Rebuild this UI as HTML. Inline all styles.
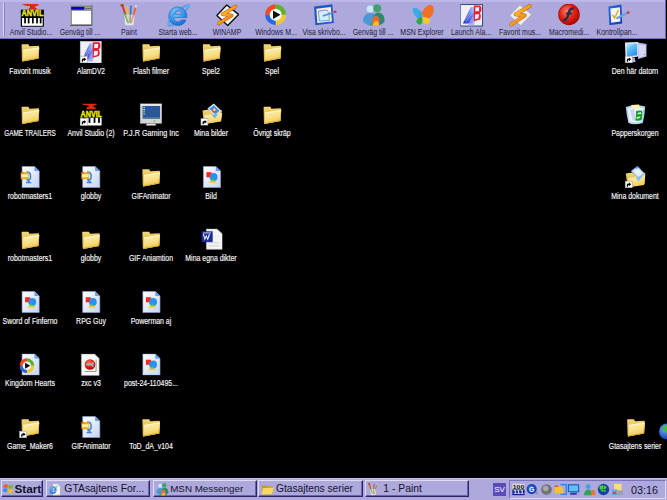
<!DOCTYPE html>
<html><head><meta charset="utf-8"><style>
html,body{margin:0;padding:0;}
body{width:667px;height:500px;background:#000;position:relative;overflow:hidden;font-family:"Liberation Sans",sans-serif;}
#tb{position:absolute;left:0;top:0;width:665px;height:38px;background:#aea9dc;border-bottom:1px solid #7872bc;border-right:1px solid #6a64b0;}
#tbtop{position:absolute;left:0;top:0;width:665px;height:2px;background:#bcb8e8;}
#grip{position:absolute;left:3px;top:3px;width:1px;height:33px;background:#dcd8f8;border-right:1px solid #8580c4;}
#icons{position:absolute;left:0;top:0;}
.tl{position:absolute;width:80px;text-align:center;font-size:8.4px;line-height:9px;color:#1c1a3c;white-space:nowrap;transform:scaleX(0.83);}
.dl{position:absolute;width:80px;text-align:center;font-size:8.4px;line-height:9px;color:#f8f8f8;white-space:nowrap;transform:scaleX(0.83);-webkit-text-stroke:0.15px #f8f8f8;}
#task{position:absolute;left:0;top:478px;width:667px;height:22px;background:#aea9dc;border-top:1px solid #c8c4ec;}
.btn{position:absolute;top:1px;height:15.4px;background:#aea9dc;border-top:1px solid #e0dcf8;border-left:1px solid #e0dcf8;border-right:1px solid #2c2668;border-bottom:1px solid #2c2668;box-shadow:inset -1px -1px 0 #6a64a8;}
.bt{position:absolute;top:1.2px;font-size:10.4px;line-height:14px;color:#14122c;white-space:nowrap;}
.grip2{position:absolute;top:3px;width:1px;height:15px;background:#e0dcf8;border-right:1px solid #6a64a8;}
#tray{position:absolute;left:509px;top:1px;width:155px;height:17px;border-top:1px solid #7872bc;border-left:1px solid #7872bc;border-right:1px solid #e0dcf8;border-bottom:1px solid #e0dcf8;}
.clock{position:absolute;left:631px;top:4.5px;font-size:10.8px;line-height:13px;color:#14122c;}
</style></head><body>
<div id="tb"><div id="tbtop"></div><div id="grip"></div></div>
<svg id="icons" width="667" height="500" viewBox="0 0 667 500"><defs>
<linearGradient id="gFront" x1="0" y1="0" x2="0.3" y2="1"><stop offset="0" stop-color="#fcf0b0"/><stop offset="0.6" stop-color="#f8e088"/><stop offset="1" stop-color="#f0c850"/></linearGradient>
<linearGradient id="gBack" x1="0" y1="0" x2="0" y2="1"><stop offset="0" stop-color="#f4d878"/><stop offset="1" stop-color="#d0a030"/></linearGradient>
<linearGradient id="gDoc" x1="0" y1="0" x2="1" y2="1"><stop offset="0" stop-color="#ffffff"/><stop offset="1" stop-color="#c4d4f4"/></linearGradient>
<linearGradient id="gScreen" x1="0" y1="0" x2="0.6" y2="1"><stop offset="0" stop-color="#c8f0ff"/><stop offset="0.45" stop-color="#60c0f8"/><stop offset="1" stop-color="#2a90f0"/></linearGradient>
<linearGradient id="gBlueA" x1="0" y1="1" x2="1" y2="0"><stop offset="0" stop-color="#1a2ad0"/><stop offset="0.6" stop-color="#6a80f0"/><stop offset="1" stop-color="#d0d8ff"/></linearGradient>
<linearGradient id="gBolt" x1="0" y1="0" x2="1" y2="1"><stop offset="0" stop-color="#ffe040"/><stop offset="0.5" stop-color="#f8a020"/><stop offset="1" stop-color="#e06010"/></linearGradient>
<linearGradient id="gCP" x1="0" y1="0" x2="1" y2="1"><stop offset="0" stop-color="#2a6ae0"/><stop offset="1" stop-color="#0c3aa8"/></linearGradient>
<radialGradient id="gRed" cx="0.4" cy="0.35" r="0.7"><stop offset="0" stop-color="#ff8070"/><stop offset="0.55" stop-color="#e02010"/><stop offset="1" stop-color="#a00808"/></radialGradient>
<radialGradient id="gIE" cx="0.4" cy="0.3" r="0.8"><stop offset="0" stop-color="#8ad0ff"/><stop offset="0.6" stop-color="#2a90e8"/><stop offset="1" stop-color="#1060c0"/></radialGradient>
<radialGradient id="gGlobe" cx="0.35" cy="0.35" r="0.75"><stop offset="0" stop-color="#6aa8ff"/><stop offset="1" stop-color="#1030a0"/></radialGradient>

<!-- ===== toolbar symbols, 23x23 px ===== -->
<symbol id="t_anvil" viewBox="0 0 23 23" overflow="visible">
  <rect x="0" y="5.7" width="23.1" height="17" fill="#000"/>
  <path d="M0.8 0.3 L6 0 L17.7 0 L17.7 1.8 L14.6 2 L14.6 3.9 L16 4 L16 5.7 L8 5.7 L8 4 L9.5 3.9 L9.5 2.2 L5 1.8 Z" fill="#e02a10"/>
  <path d="M9.5 2.2 L10.5 2.2 L10.3 3.9 L9.5 3.9 Z" fill="#303060"/>
  <text x="11.6" y="12.4" font-family="Liberation Sans" font-weight="bold" font-size="8.8" fill="#f4f000" stroke="#f4f000" stroke-width="0.35" text-anchor="middle" textLength="22" lengthAdjust="spacingAndGlyphs">ANVIL</text>
  <rect x="1.2" y="14" width="20.7" height="7.8" fill="#fff"/>
  <rect x="3.4" y="14" width="1.7" height="5.4" fill="#000"/>
  <rect x="7" y="14" width="1.7" height="5.4" fill="#000"/>
  <rect x="11.2" y="14" width="1.7" height="5.4" fill="#000"/>
  <rect x="15.4" y="14" width="1.7" height="5.4" fill="#000"/>
  <rect x="19" y="14" width="1.7" height="5.4" fill="#000"/>
</symbol>
<symbol id="t_window" viewBox="0 0 23 23">
  <rect x="0.4" y="1.1" width="22.4" height="20.7" fill="#3a3a3a"/>
  <rect x="0.4" y="1.1" width="21.6" height="20" fill="#a8a8a8"/>
  <rect x="1.4" y="2.1" width="20.6" height="18.8" fill="#808080"/>
  <rect x="1.6" y="2.9" width="13.2" height="2.7" fill="#0000c8"/>
  <rect x="15" y="2.9" width="6.4" height="2.7" fill="#b0b0b0"/>
  <rect x="16" y="3.8" width="1" height="1" fill="#000"/><rect x="18" y="3.8" width="1" height="1" fill="#000"/><rect x="20" y="3.8" width="1" height="1" fill="#000"/>
  <rect x="2.2" y="6.8" width="19.2" height="13.4" fill="#fff"/>
</symbol>
<symbol id="t_paint" viewBox="0 0 23 23">
  <path d="M5.5 10.4 L16.3 10.4 L15.2 21.2 L6.6 21.2 Z" fill="#e8f0f4" stroke="#98a8b0" stroke-width="0.7"/>
  <path d="M3.8 1.2 L9.5 19" stroke="#e03020" stroke-width="1.8"/>
  <path d="M8.5 2 L11 19.5" stroke="#f0c020" stroke-width="1.9"/>
  <path d="M12.5 1.5 L11.5 19" stroke="#3a70e0" stroke-width="1.7"/>
  <path d="M17.5 2.5 L12.5 19.5" stroke="#f06020" stroke-width="1.8"/>
  <path d="M6 9 L9.8 19.5" stroke="#30b040" stroke-width="1.6"/>
  <circle cx="3.6" cy="1.2" r="1.6" fill="#b04a20"/>
  <circle cx="17.6" cy="2.4" r="1.3" fill="#d0d0f0"/>
  <path d="M5.5 10.4 L16.3 10.4 L15.2 21.2 L6.6 21.2 Z" fill="#f4f8ff" opacity="0.35"/>
</symbol>
<symbol id="t_ie" viewBox="0 0 23 23">
  <path d="M10.5 3 C5 3 1.5 7 1.5 12.5 C1.5 18 5.5 21.5 10.5 21.5 C14.5 21.5 17.5 19.5 18.8 16 L13.8 16 C13 17.3 11.8 17.8 10.5 17.8 C8 17.8 6.3 16 6.2 13.6 L19.4 13.6 C19.5 13 19.5 12.7 19.5 12.2 C19.5 6.8 15.8 3 10.5 3 Z M6.4 10.3 C6.8 8 8.4 6.7 10.6 6.7 C12.8 6.7 14.3 8 14.6 10.3 Z" fill="url(#gIE)" stroke="#1868c0" stroke-width="0.6"/>
  <path d="M0.8 21.8 C-1 19.5 2.5 13 9 7.5 C15.5 2 21 -0.5 22 1 C22.8 2.2 21 4.8 18 7.5 C19.5 5.3 20 3.6 19.2 3 C17.8 2 13 4.5 8.5 8.8 C3.5 13.5 1.2 18.5 2.6 20.8 C3.3 21.8 5.5 21.3 8 20 C5 22 2 22.8 0.8 21.8 Z" fill="#60b8f8" stroke="#2878d0" stroke-width="0.4"/>
</symbol>
<symbol id="t_winamp" viewBox="0 0 23 23">
  <path d="M10.6 1 L22.4 10.4 L11.6 21.6 L0.6 11.6 Z" fill="#f4f4f4" stroke="#101010" stroke-width="1.4" stroke-linejoin="round"/>
  <path d="M19.5 2.5 L6.5 10.3 L15.5 11.5 L2.5 19.5" fill="none" stroke="#c05808" stroke-width="3.6" stroke-linejoin="round" stroke-linecap="round"/>
  <path d="M19.5 2.5 L6.5 10.3 L15.5 11.5 L2.5 19.5" fill="none" stroke="url(#gBolt)" stroke-width="2.6" stroke-linejoin="round" stroke-linecap="round"/>
</symbol>
<symbol id="t_winamp2" viewBox="0 0 23 23">
  <path d="M10.6 1 L22.4 10.4 L11.6 21.6 L0.6 11.6 Z" fill="#ececf0" stroke="#a8a8b8" stroke-width="0.8" stroke-linejoin="round"/>
  <path d="M20.5 2 L6.5 10.3 L15.5 11.5 L2 20.5" fill="none" stroke="#c05808" stroke-width="3.8" stroke-linejoin="round" stroke-linecap="round"/>
  <path d="M20.5 2 L6.5 10.3 L15.5 11.5 L2 20.5" fill="none" stroke="url(#gBolt)" stroke-width="2.8" stroke-linejoin="round" stroke-linecap="round"/>
</symbol>
<symbol id="t_wmp" viewBox="0 0 23 23">
  <path d="M10.65 10.7 L10.65 0.2 A10.5 10.5 0 0 0 0.15 10.7 Z" fill="#f04a20"/>
  <path d="M10.65 10.7 L21.15 10.7 A10.5 10.5 0 0 0 10.65 0.2 Z" fill="#60b030"/>
  <path d="M10.65 10.7 L10.65 21.2 A10.5 10.5 0 0 0 21.15 10.7 Z" fill="#f0c830"/>
  <path d="M10.65 10.7 L0.15 10.7 A10.5 10.5 0 0 0 10.65 21.2 Z" fill="#2a6ae0"/>
  <circle cx="10.65" cy="10.7" r="6" fill="#f8f8f8"/>
  <path d="M8 6.5 L15.5 10.7 L8 15 Z" fill="#101010"/>
</symbol>
<symbol id="t_showdesk" viewBox="0 0 23 23">
  <path d="M0.2 2.5 L18.5 0.2 L20 19 L1.5 21.2 Z" fill="#1c58d0"/>
  <path d="M2.5 4.8 L17 3 L18 17.5 L3.5 19 Z" fill="#fff0c0"/>
  <path d="M4.5 7 L13 6 L15 8.5 L15.5 16.5 L5.5 17 Z" fill="#d8ecff" stroke="#5888d0" stroke-width="0.8"/>
  <path d="M9 12 L21 8" stroke="#4a88e0" stroke-width="1.8"/>
  <circle cx="21.5" cy="7.8" r="1.3" fill="#e03030"/>
</symbol>
<symbol id="t_msn" viewBox="0 0 23 23">
  <circle cx="7.5" cy="5" r="3.6" fill="#c8e8f8"/>
  <circle cx="14.5" cy="4.2" r="4" fill="#40a070"/>
  <path d="M0 17 Q1 9 8 9 Q13 9 13 14 L9 21.8 Q3 21 0 17 Z" fill="#4a98d8"/>
  <path d="M10 19 Q10 8.5 15 8.5 Q22 8.5 22 17 Q20 21 16 21 Z" fill="#308870"/>
  <path d="M8.5 21.5 Q9 12 13.5 12 Q17.5 12 16.5 21.5 Z" fill="#f06a30"/>
  <path d="M10 21.5 Q11 17 14.5 17 Q16.5 18 16 21.5 Z" fill="#f8c030"/>
  <path d="M7 21.5 Q8 18 10.5 18 L9.5 21.8 Z" fill="#40b040"/>
</symbol>
<symbol id="t_msnexp" viewBox="0 0 23 23">
  <path d="M11 9 Q5 2.5 1.5 4 Q0 6 3 11 Q5 14.5 10 15.5 Z" fill="#40a8e8"/>
  <path d="M10 9 Q14 1 19 0.8 Q23 1.5 22 8 Q21 14 13 16 Z" fill="#f07028"/>
  <path d="M9.5 13 Q4 15 5 18.5 Q6.5 21 9 20.6 Q11 19 11 14 Z" fill="#30a840"/>
  <path d="M11 13 Q18 13 18.5 16.5 Q18 20.5 13.5 20 Q11 18 11 14 Z" fill="#f8c828"/>
  <path d="M6 9 Q8 7 10.5 10 L10 14 Q7 12 6 9 Z" fill="#30b0b0" opacity="0.8"/>
</symbol>
<symbol id="t_alam" viewBox="0 0 23 23">
  <rect x="0" y="0.6" width="22.2" height="21.4" fill="#f0f0f4" stroke="#283880" stroke-width="0.9"/>
  <path d="M2.5 19.5 L10.5 3 L16 3 L12 19.5 Z" fill="url(#gBlueA)"/>
  <path d="M4 16.5 L13 4.5 M5.5 18 L14 6" stroke="#e0e4ff" stroke-width="0.6" opacity="0.8"/>
  <path d="M7 21.5 L14 9.5 L16.5 10.5 L13.5 21.5 Z" fill="#9aa8f0" opacity="0.8"/>
  <path d="M13.5 1.5 L19.8 1.5 Q21.8 3 20.8 7.5 L19.3 9 Q21.3 10.5 19.8 15.5 L13.3 17.3 Z" fill="#e82030"/>
  <path d="M15.1 3.3 L18.9 3.3 L18.6 7.3 L14.9 7.3 Z M14.9 10.3 L18.8 10.3 L18.1 14.3 L14.5 15.3 Z" fill="#f8f4ff"/>
</symbol>
<symbol id="t_flash" viewBox="0 0 23 23">
  <circle cx="10.95" cy="10.4" r="10.8" fill="#b00c08"/>
  <circle cx="10.95" cy="10.4" r="10" fill="url(#gRed)"/>
  <path d="M16 4.5 Q11.5 4 10.5 9.5 Q9.5 15.5 5 16.5" fill="none" stroke="#1c3050" stroke-width="2.3"/>
  <path d="M8 9.5 L14 9.5" stroke="#1c3050" stroke-width="2"/>
</symbol>
<symbol id="t_ctrl" viewBox="0 0 23 23">
  <path d="M1.5 2.5 L14.5 0.5 L15.3 19.5 L2.5 21.2 Z" fill="url(#gCP)"/>
  <path d="M3.5 4.5 L13 3.2 L13.5 17.5 L4.3 18.8 Z" fill="#f0f4ff"/>
  <path d="M5.5 11 L7.7 14 L11.5 6" fill="none" stroke="#e0b020" stroke-width="1.5"/>
  <path d="M9.5 14.5 L20.5 9" stroke="#68a0e8" stroke-width="2.2"/>
  <circle cx="21.3" cy="8.6" r="1.4" fill="#d83a20"/>
</symbol>

<!-- ===== desktop symbols, 22x22 px ===== -->
<symbol id="folder" viewBox="0 0 22 22">
  <path d="M2.6 3.6 L3.2 3.3 L9.4 3.2 L10.4 5.2 L19.8 4.8 L20.3 6.9 L19.6 17.6 L3.4 20.5 L2.9 18.8 Z" fill="url(#gBack)"/>
  <path d="M4.2 9 L20.1 6.6 L19.4 17.5 L3.4 20.4 Z" fill="url(#gFront)"/>
  <path d="M4.2 9 L20.1 6.6 L20 7.6 L4.1 10 Z" fill="#fff8d0"/>
  <path d="M20.1 6.6 L19.4 17.5 L3.4 20.4 L3.6 19.4 L18.6 16.8 Z" fill="#d8a838"/>
</symbol>
<symbol id="arrow" viewBox="0 0 22 22">
  <rect x="0.6" y="15.2" width="7" height="6.6" fill="#fff" stroke="#a0a0a0" stroke-width="0.6"/>
  <path d="M2.2 20.8 L2.2 19 Q2.2 17.6 4 17.6 L4.4 17.6 L4.4 16.4 L6.6 18.3 L4.4 20.2 L4.4 19 L4.1 19 Q3.5 19 3.5 19.6 L3.5 20.8 Z" fill="#000"/>
</symbol>
<symbol id="doc" viewBox="0 0 22 22">
  <path d="M3.1 0.4 L15.5 0.4 L20.2 5 L20.2 21.6 L3.1 21.6 Z" fill="url(#gDoc)" stroke="#98a8d8" stroke-width="0.6"/>
  <path d="M15.5 0.4 L15.5 5 L20.2 5 Z" fill="#60a0f0"/>
</symbol>
<symbol id="imgdoc" viewBox="0 0 22 22">
  <use href="#doc" width="22" height="22"/>
  <rect x="6.1" y="6.2" width="5.1" height="5.1" fill="#f82a10"/>
  <circle cx="13.3" cy="10.9" r="3.9" fill="#2a90f8"/>
  <path d="M10.2 15.2 L12.5 11.9 L14.8 15.2 Z" fill="#40d040"/>
  <rect x="9.1" y="15.2" width="6.6" height="1.5" fill="#f8c820"/>
</symbol>
<symbol id="gifdoc" viewBox="0 0 22 22">
  <use href="#doc" width="22" height="22"/>
  <path d="M7.5 6 Q11.5 6 11.5 9.5 L11.5 11.5 Q11.5 13.8 9 13.8 L7.5 13.8 M8.5 13.8 L11 16.5 L7 16.5" fill="none" stroke="#3a80e0" stroke-width="1.5"/>
  <rect x="1.8" y="6.2" width="7.8" height="7" fill="#e8a828"/>
  <rect x="2.4" y="8.2" width="6.6" height="3" fill="#fff0a0"/>
  <rect x="1.8" y="6.2" width="2.5" height="1.2" fill="#e05020"/>
</symbol>
<symbol id="anvil" viewBox="0 0 22 22">
  <path d="M0.8 0 L17 0 L17 1.6 L14 2 L14 3.6 L16 4 L16 5.8 L7 5.8 L7 4 L9 3.6 L9 2 L4.5 1.6 Z" fill="#e02a10"/>
  <text x="11.7" y="13" font-family="Liberation Sans" font-weight="bold" font-size="9.5" fill="#f4f000" stroke="#f4f000" stroke-width="0.4" text-anchor="middle" textLength="21.5" lengthAdjust="spacingAndGlyphs">ANVIL</text>
  <rect x="0.6" y="14.2" width="22" height="8.3" fill="#fff"/>
  <rect x="4" y="14.2" width="1.8" height="5.2" fill="#000"/>
  <rect x="9" y="14.2" width="1.8" height="5.2" fill="#000"/>
  <rect x="14" y="14.2" width="1.8" height="5.2" fill="#000"/>
  <rect x="18.5" y="14.2" width="1.8" height="5.2" fill="#000"/>
</symbol>
<symbol id="monitor" viewBox="0 0 22 22">
  <rect x="0.3" y="-0.1" width="22.2" height="20" fill="#d4d4d4" stroke="#8a8a8a" stroke-width="0.6"/>
  <rect x="1" y="0.6" width="20.8" height="1.5" fill="#ececec"/>
  <rect x="2.8" y="2.5" width="17.4" height="12.6" fill="#2a5894"/>
  <rect x="2.8" y="13.8" width="17.4" height="1.3" fill="#5a78a8"/>
  <rect x="3.6" y="3.3" width="1.5" height="1.3" fill="#60e0c0"/>
  <rect x="3.6" y="5.5" width="1.5" height="1.3" fill="#f0f0a0"/>
  <rect x="3.6" y="7.7" width="1.5" height="1.3" fill="#a0d060"/>
  <rect x="3.6" y="9.9" width="1.5" height="1.3" fill="#90c0f0"/>
  <rect x="14" y="17" width="1.5" height="1.2" fill="#30c030"/>
  <path d="M7 19.9 L15.5 19.9 L16.5 22.9 L6 22.9 Z" fill="#e4e4e4" stroke="#888" stroke-width="0.5"/>
</symbol>
<symbol id="alam" viewBox="0 0 22 22">
  <rect x="0.6" y="0.3" width="21.5" height="21.8" fill="#f0f0f4" stroke="#a8c0e0" stroke-width="0.7"/>
  <path d="M2.5 18.5 L10 2.5 L15.5 2.5 L11.5 18.5 Z" fill="url(#gBlueA)"/>
  <path d="M4 15.5 L12.5 4 M5.5 17 L13.5 5.5" stroke="#e0e4ff" stroke-width="0.6" opacity="0.8"/>
  <path d="M7 20.5 L13.5 9 L16 10 L13 20.5 Z" fill="#9aa8f0" opacity="0.8"/>
  <path d="M13.2 1.2 L19.5 1.2 Q21.5 2.5 20.5 7 L19 8.5 Q21 10 19.5 15 L13 16.8 Z" fill="#e82030"/>
  <path d="M14.8 3 L18.6 3 L18.3 7 L14.6 7 Z M14.6 10 L18.5 10 L17.8 14 L14.2 15 Z" fill="#f8f4ff"/>
</symbol>
<symbol id="mypics" viewBox="0 0 22 22">
  <path d="M2.2 7 L8.5 6 L10 7.5 L21.5 6.5 L21 17.5 L3.5 20.6 Z" fill="url(#gBack)"/>
  <path d="M7.5 5 L13.5 0.2 L21 7.5 L15 12.5 Z" fill="#fff" stroke="#b8c8e0" stroke-width="0.6"/>
  <path d="M8.8 5.2 L13.5 1.6 L19.5 7.5 L15 11 Z" fill="#3a98e8"/>
  <circle cx="14" cy="7" r="2.2" fill="#f04830"/>
  <circle cx="14" cy="6.3" r="1.2" fill="#ffe0d0"/>
  <path d="M4 11.5 L22 9.5 L20.5 18 L4.5 20.6 Z" fill="url(#gFront)"/>
  <path d="M11 11 L18 10.2 L14.5 15 Z" fill="#70b8f0"/>
</symbol>
<symbol id="worddoc" viewBox="0 0 22 22">
  <path d="M6.1 0.4 L16.5 0.4 L22.3 5.5 L22.3 20.8 L6.1 20.8 Z" fill="#f4f4f4" stroke="#c0c0c0" stroke-width="0.6"/>
  <rect x="8" y="14" width="11" height="0.8" fill="#c8c8c8"/>
  <rect x="8" y="17" width="11" height="0.8" fill="#c8c8c8"/>
  <rect x="1.3" y="2.8" width="11.1" height="10.8" fill="#1c2c98"/>
  <rect x="2.8" y="4" width="8" height="0.9" fill="#e0e8ff"/>
  <path d="M2.6 5.8 L4.5 12 L6 8.5 L7.5 12 L9.8 5.8 L8.5 5.8 L7.4 9.5 L6 6.2 L4.6 9.5 L3.8 5.8 Z" fill="#fff"/>
</symbol>
<symbol id="wmpdoc" viewBox="0 0 22 22">
  <use href="#doc" width="22" height="22"/>
  <g transform="translate(0.4 4.6) scale(0.705)"><use href="#t_wmp" width="23" height="23"/></g>
</symbol>
<symbol id="reddoc" viewBox="0 0 22 22">
  <path d="M1.8 0.6 L15 0.6 L19.5 5 L19.5 22.4 L1.8 22.4 Z" fill="#f8f8f4" stroke="#b0b0a8" stroke-width="0.6"/>
  <circle cx="10.4" cy="11" r="5.3" fill="url(#gRed)"/>
  <path d="M6.5 10 L12.5 10 L12.5 8.5 L14 8.5 L14 13.5 L12.5 13.5 L12.5 12 L6.5 12 Z" fill="#a8b0b8"/>
  <path d="M5 18 L16.5 18 L16.5 6" fill="none" stroke="#808080" stroke-width="0.8"/>
</symbol>
<symbol id="computer" viewBox="0 0 22 22">
  <path d="M12.9 1.5 L22.2 3 L22.2 15.5 L13.5 18 Z" fill="#b8b8e8"/>
  <path d="M14 3.5 L21 4.5 L21 14.5 L14.5 16.5 Z" fill="#d8d8f4"/>
  <rect x="19" y="13" width="1.4" height="1" fill="#60d060"/>
  <path d="M0.3 1.5 L13.5 0.9 L13.5 15.5 L1 17.4 Z" fill="#e4e4f8"/>
  <path d="M1.8 3 L12.5 2.5 L12.5 14.3 L2.5 15.6 Z" fill="url(#gScreen)"/>
  <path d="M6 17 L10 16.5 L11 21 L5.5 21.5 Z" fill="#b0b0e0"/>
</symbol>
<symbol id="recycle" viewBox="0 0 22 22">
  <path d="M1.2 3.5 Q10 0.5 20.6 3 Q20 12 18.2 19.5 Q10 22 3.8 19.5 Q2 12 1.2 3.5 Z" fill="#b0d4f4"/>
  <path d="M3 4.8 Q10 3 18.8 4.6 Q18 12 16.8 18 Q10 20 5 18 Q4 12 3 4.8 Z" fill="#e8f4fc"/>
  <path d="M6.5 1.6 L14.5 1 L15.2 5 L7 5.5 Z" fill="#f8f0b0"/>
  <path d="M5.5 6 L9.5 5.5 L11 16.5 L8 17 Z" fill="#c8c0f0" opacity="0.7"/>
  <path d="M11.5 7.5 Q15 6.5 17.7 7.3 Q18 12 17 16.5 Q14 17.5 10.8 16.9 Q11.5 12 11.5 7.5 Z" fill="#10a020"/>
  <path d="M12.8 10.3 Q13.5 8.8 15.5 9 L15 8.2 L17 9.7 L15 11 L15.2 10.2 Q14 10 13.6 11 Z M16 13 Q15.3 15.2 13 15 L13.5 15.8 L11.6 14.3 L13.6 13 L13.4 13.8 Q14.6 14 15 12.8 Z" fill="#f0fff0"/>
</symbol>
<symbol id="mydocs" viewBox="0 0 22 22">
  <path d="M1.2 7.5 L8 6.5 L9.5 8 L20.7 6.8 L20 18 L3 21.2 Z" fill="url(#gBack)"/>
  <path d="M6.5 5 L13 0.2 L20 7.5 L13.5 12 Z" fill="#b8d8f8" stroke="#7ca4e0" stroke-width="0.6"/>
  <circle cx="12.6" cy="2.2" r="1.1" fill="#2a80f0"/>
  <path d="M8.5 5.5 L13 2 L18 7.5 L13.8 10.5 Z" fill="#e4f2ff"/>
  <path d="M3.5 12 L20.7 9.2 L19.5 19 L4.5 21.2 Z" fill="url(#gFront)"/>
  <path d="M11 11 L18 9.8 L14 15.5 Z" fill="#80c0f8"/>
</symbol>
<symbol id="globe" viewBox="0 0 32 32">
  <circle cx="16" cy="16" r="15" fill="url(#gGlobe)"/>
  <path d="M10 4 Q18 3 20 9 Q15 13 18 19 Q10 17 7 11 Z" fill="#40c040"/>
  <path d="M20 16 Q27 14 30 20 Q27 28 22 26 Z" fill="#40c040"/>
</symbol>
<symbol id="winlogo" viewBox="0 0 16 16">
  <path d="M1 2.5 Q4 1 7.3 2.3 L6.8 7.3 Q4 6 0.6 7.3 Z" fill="#f25a1e"/>
  <path d="M8.3 2.6 Q11.5 4 15 2.4 L14.5 7.5 Q11.5 9 7.8 7.6 Z" fill="#6fbf20"/>
  <path d="M0.5 8.3 Q4 7 6.7 8.3 L6.2 13.5 Q3.5 12.2 0 13.5 Z" fill="#3a8ee6"/>
  <path d="M7.7 8.6 Q11 10 14.4 8.5 L14 13.8 Q11 15.2 7.3 13.8 Z" fill="#fac000"/>
</symbol>
<symbol id="iedoc" viewBox="0 0 32 32">
  <path d="M9 2 L22 2 L28 8 L28 30 L9 30 Z" fill="#f8f8f0" stroke="#909088" stroke-width="1.2"/>
  <path d="M22 2 L22 8 L28 8 Z" fill="#d0d0c8"/>
  <g transform="translate(0 6) scale(0.95)"><use href="#t_ie" width="23" height="23"/></g>
</symbol>
<symbol id="tfolder" viewBox="0 0 32 32">
  <path d="M2 7 L12 6 L14 8.5 L29 7.5 L29 27 L2 28 Z" fill="#c89820"/>
  <path d="M4 13 L31 11 L28 27 L2 28 Z" fill="#f8d860"/>
</symbol>
<symbol id="tpaint" viewBox="0 0 32 32">
  <use href="#t_paint" width="32" height="32"/>
</symbol>
<symbol id="tmsn" viewBox="0 0 32 32">
  <use href="#t_msn" width="32" height="32"/>
</symbol>
</defs><use href="#t_anvil" x="20.80" y="4.00" width="23" height="23"/><use href="#t_window" x="69.64" y="4.00" width="23" height="23"/><use href="#t_paint" x="118.48" y="4.00" width="23" height="23"/><use href="#t_ie" x="167.32" y="4.00" width="23" height="23"/><use href="#t_winamp" x="216.16" y="4.00" width="23" height="23"/><use href="#t_wmp" x="265.00" y="4.00" width="23" height="23"/><use href="#t_showdesk" x="313.84" y="4.00" width="23" height="23"/><use href="#t_msn" x="362.68" y="4.00" width="23" height="23"/><use href="#t_msnexp" x="411.52" y="4.00" width="23" height="23"/><use href="#t_alam" x="460.36" y="4.00" width="23" height="23"/><use href="#t_winamp2" x="509.20" y="4.00" width="23" height="23"/><use href="#t_flash" x="558.04" y="4.00" width="23" height="23"/><use href="#t_ctrl" x="606.88" y="4.00" width="23" height="23"/><use href="#folder" x="19.00" y="41.00" width="22" height="22"/><use href="#alam" x="79.60" y="41.00" width="22" height="22"/><use href="#arrow" x="79.60" y="41.00" width="22" height="22"/><use href="#folder" x="139.80" y="41.00" width="22" height="22"/><use href="#folder" x="200.30" y="41.00" width="22" height="22"/><use href="#folder" x="261.00" y="41.00" width="22" height="22"/><use href="#folder" x="19.00" y="103.50" width="22" height="22"/><use href="#anvil" x="79.60" y="103.50" width="22" height="22"/><use href="#arrow" x="79.60" y="103.50" width="22" height="22"/><use href="#monitor" x="139.80" y="103.50" width="22" height="22"/><use href="#mypics" x="200.30" y="103.50" width="22" height="22"/><use href="#arrow" x="200.30" y="103.50" width="22" height="22"/><use href="#folder" x="261.00" y="103.50" width="22" height="22"/><use href="#gifdoc" x="19.00" y="166.00" width="22" height="22"/><use href="#gifdoc" x="79.60" y="166.00" width="22" height="22"/><use href="#folder" x="139.80" y="166.00" width="22" height="22"/><use href="#imgdoc" x="200.30" y="166.00" width="22" height="22"/><use href="#folder" x="19.00" y="228.50" width="22" height="22"/><use href="#folder" x="79.60" y="228.50" width="22" height="22"/><use href="#folder" x="139.80" y="228.50" width="22" height="22"/><use href="#worddoc" x="200.30" y="228.50" width="22" height="22"/><use href="#imgdoc" x="19.00" y="291.00" width="22" height="22"/><use href="#imgdoc" x="79.60" y="291.00" width="22" height="22"/><use href="#imgdoc" x="139.80" y="291.00" width="22" height="22"/><use href="#wmpdoc" x="19.00" y="353.50" width="22" height="22"/><use href="#reddoc" x="79.60" y="353.50" width="22" height="22"/><use href="#imgdoc" x="139.80" y="353.50" width="22" height="22"/><use href="#folder" x="19.00" y="416.00" width="22" height="22"/><use href="#arrow" x="19.00" y="416.00" width="22" height="22"/><use href="#gifdoc" x="79.60" y="416.00" width="22" height="22"/><use href="#folder" x="139.80" y="416.00" width="22" height="22"/><use href="#computer" x="624.60" y="41.00" width="22" height="22"/><use href="#arrow" x="624.60" y="41.00" width="22" height="22"/><use href="#recycle" x="624.60" y="103.50" width="22" height="22"/><use href="#mydocs" x="624.60" y="166.00" width="22" height="22"/><use href="#arrow" x="624.60" y="166.00" width="22" height="22"/><use href="#folder" x="624.60" y="416.00" width="22" height="22"/><use href="#globe" x="658.50" y="423.00" width="17" height="17"/></svg>
<div class="tl" style="left:-8.7px;top:27.9px">Anvil Studio...</div><div class="tl" style="left:40.1px;top:27.9px">Genväg till ...</div><div class="tl" style="left:89.0px;top:27.9px">Paint</div><div class="tl" style="left:137.8px;top:27.9px">Starta web...</div><div class="tl" style="left:186.7px;top:27.9px">WINAMP</div><div class="tl" style="left:235.5px;top:27.9px">Windows M...</div><div class="tl" style="left:284.3px;top:27.9px">Visa skrivbo...</div><div class="tl" style="left:333.2px;top:27.9px">Genväg till ...</div><div class="tl" style="left:382.0px;top:27.9px">MSN Explorer</div><div class="tl" style="left:430.9px;top:27.9px">Launch Ala...</div><div class="tl" style="left:479.7px;top:27.9px">Favorit mus...</div><div class="tl" style="left:528.5px;top:27.9px">Macromedi...</div><div class="tl" style="left:577.4px;top:27.9px">Kontrollpan...</div><div class="dl" style="left:-10.0px;top:66.9px">Favorit musik</div><div class="dl" style="left:50.6px;top:66.9px;transform:scaleX(0.79)">AlamDV2</div><div class="dl" style="left:110.8px;top:66.9px">Flash filmer</div><div class="dl" style="left:171.3px;top:66.9px">Spel2</div><div class="dl" style="left:232.0px;top:66.9px">Spel</div><div class="dl" style="left:-10.0px;top:129.4px;transform:scaleX(0.76)">GAME TRAILERS</div><div class="dl" style="left:50.6px;top:129.4px">Anvil Studio (2)</div><div class="dl" style="left:110.8px;top:129.4px;transform:scaleX(0.86)">P.J.R Gaming Inc</div><div class="dl" style="left:171.3px;top:129.4px">Mina bilder</div><div class="dl" style="left:232.0px;top:129.4px">Övrigt skräp</div><div class="dl" style="left:-10.0px;top:191.9px">robotmasters1</div><div class="dl" style="left:50.6px;top:191.9px">globby</div><div class="dl" style="left:110.8px;top:191.9px">GIFAnimator</div><div class="dl" style="left:171.3px;top:191.9px">Bild</div><div class="dl" style="left:-10.0px;top:254.4px">robotmasters1</div><div class="dl" style="left:50.6px;top:254.4px">globby</div><div class="dl" style="left:110.8px;top:254.4px">GIF Aniamtion</div><div class="dl" style="left:171.3px;top:254.4px">Mina egna dikter</div><div class="dl" style="left:-10.0px;top:316.9px">Sword of Finferno</div><div class="dl" style="left:50.6px;top:316.9px">RPG Guy</div><div class="dl" style="left:110.8px;top:316.9px">Powerman aj</div><div class="dl" style="left:-10.0px;top:379.4px">Kingdom Hearts</div><div class="dl" style="left:50.6px;top:379.4px">zxc v3</div><div class="dl" style="left:110.8px;top:379.4px">post-24-110495...</div><div class="dl" style="left:-10.0px;top:441.9px">Game_Maker6</div><div class="dl" style="left:50.6px;top:441.9px">GIFAnimator</div><div class="dl" style="left:110.8px;top:441.9px">ToD_dA_v104</div><div class="dl" style="left:594.6px;top:66.9px">Den här datorn</div><div class="dl" style="left:594.6px;top:129.4px">Papperskorgen</div><div class="dl" style="left:594.6px;top:191.9px">Mina dokument</div><div class="dl" style="left:594.6px;top:441.9px">Gtasajtens serier</div>
<div id="task"><div class="btn" style="left:1px;width:40px"><svg style="position:absolute;left:0.8px;top:2px;width:10.5px;height:11px" viewBox="0 0 16 16"><use href="#winlogo" width="16" height="16"/></svg><span class="bt" style="left:12.4px;font-weight:bold;font-size:11.8px;letter-spacing:0px">Start</span></div><div class="btn" style="left:46px;width:102px"><svg style="position:absolute;left:1.5px;top:1.5px;width:13px;height:13px" viewBox="0 0 32 32"><use href="#iedoc" width="32" height="32"/></svg><span class="bt" style="left:17.299999999999997px;font-size:10.4px">GTAsajtens For...</span></div><div class="btn" style="left:153px;width:102px"><svg style="position:absolute;left:1.5px;top:1.5px;width:13px;height:13px" viewBox="0 0 32 32"><use href="#tmsn" width="32" height="32"/></svg><span class="bt" style="left:16.19999999999999px;font-size:9.8px">MSN Messenger</span></div><div class="btn" style="left:258px;width:103px"><svg style="position:absolute;left:1.5px;top:1.5px;width:13px;height:13px" viewBox="0 0 32 32"><use href="#tfolder" width="32" height="32"/></svg><span class="bt" style="left:17px;font-size:10.2px">Gtasajtens serier</span></div><div class="btn" style="left:365px;width:102px"><svg style="position:absolute;left:0.5px;top:1.5px;width:13px;height:13px" viewBox="0 0 32 32"><use href="#tpaint" width="32" height="32"/></svg><span class="bt" style="left:17.30000000000001px;font-size:10.4px">1 - Paint</span></div><div style="position:absolute;left:493px;top:3.5px;width:13px;height:13px;background:#5a4cb8;color:#fff;font-size:8px;line-height:13px;text-align:center;">SV</div><div id="tray"></div><svg style="position:absolute;left:511.5px;top:4.2px;width:13px;height:13px" viewBox="0 0 32 32"><rect x="1" y="2" width="30" height="14" fill="#d8d8e0"/><text x="16" y="14" font-size="13" font-family="Liberation Sans" font-weight="bold" text-anchor="middle" fill="#101010" textLength="28" lengthAdjust="spacingAndGlyphs">100</text><rect x="1" y="16" width="30" height="14" fill="#10208a"/><text x="16" y="28" font-size="13" font-family="Liberation Sans" font-weight="bold" text-anchor="middle" fill="#f0f0ff" textLength="26" lengthAdjust="spacingAndGlyphs">111</text></svg><svg style="position:absolute;left:525.5px;top:4.2px;width:13px;height:13px" viewBox="0 0 32 32"><circle cx="14" cy="15" r="12.5" fill="#1848b8"/><circle cx="12" cy="12" r="6" fill="#3a80f0" opacity="0.7"/><text x="14" y="21" font-size="17" font-family="Liberation Sans" font-weight="bold" text-anchor="middle" fill="#fff">G</text><path d="M22 24 L29 20 L29 29 Z" fill="#909098"/></svg><svg style="position:absolute;left:539.5px;top:4.2px;width:13px;height:13px" viewBox="0 0 32 32"><circle cx="16" cy="16" r="13" fill="#707070"/><circle cx="14" cy="13" r="7" fill="#a8a8a8"/><path d="M18 26 L28 28" stroke="#9090c0" stroke-width="2"/></svg><svg style="position:absolute;left:554px;top:4.2px;width:13px;height:13px" viewBox="0 0 32 32"><rect x="2" y="9" width="20" height="16" fill="#f8c030"/><rect x="2" y="6" width="8" height="4" fill="#f05030"/><path d="M16 4 L30 4 L30 28 L16 28" fill="none" stroke="#2a80e0" stroke-width="3"/></svg><svg style="position:absolute;left:567px;top:4.2px;width:13px;height:13px" viewBox="0 0 32 32"><rect x="2" y="3" width="28" height="20" fill="#1a60d0"/><rect x="5" y="6" width="22" height="14" fill="#60c0f0"/><rect x="8" y="24" width="16" height="5" fill="#2a40a0"/></svg><svg style="position:absolute;left:583px;top:4.2px;width:13px;height:13px" viewBox="0 0 32 32"><circle cx="13" cy="9" r="6" fill="#40a0e0"/><path d="M2 30 Q4 16 13 16 Q22 16 22 30 Z" fill="#30a060"/><rect x="20" y="18" width="10" height="12" fill="#f07030"/></svg><svg style="position:absolute;left:597px;top:4.2px;width:13px;height:13px" viewBox="0 0 32 32"><circle cx="16" cy="16" r="14" fill="#1840b0"/><path d="M6 8 Q16 2 24 10 Q18 16 22 22 Q10 22 6 14 Z" fill="#40d040"/><path d="M4 16 L28 16 M16 3 L16 29" stroke="#104010" stroke-width="1"/></svg><svg style="position:absolute;left:611px;top:4.2px;width:13px;height:13px" viewBox="0 0 32 32"><rect x="8" y="2" width="18" height="18" fill="#f8e070"/><rect x="2" y="16" width="14" height="14" fill="#60a8e8"/><rect x="16" y="18" width="14" height="12" fill="#a0a0b0"/><rect x="5" y="22" width="7" height="5" fill="#e04030"/></svg><div class="clock">03:16</div></div>
</body></html>
